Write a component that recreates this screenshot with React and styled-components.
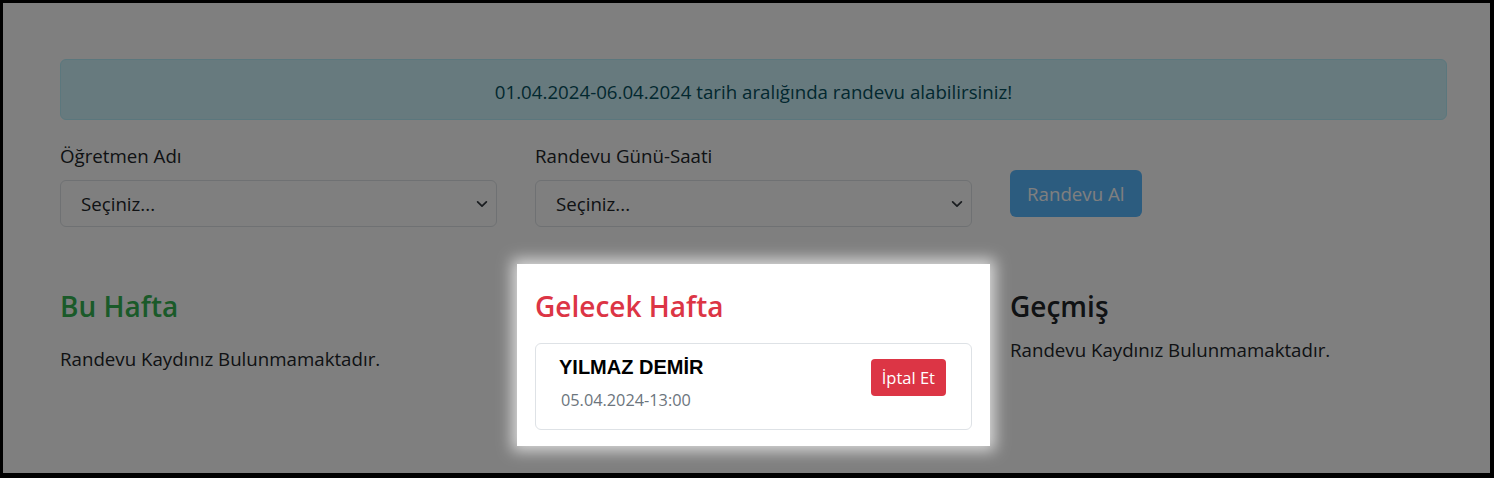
import React from "react";
import styled, { createGlobalStyle } from "styled-components";

const GlobalStyle = createGlobalStyle`
  html, body {
    margin: 0;
    padding: 0;
    background: #000;
  }
  body {
    font-family: "Open Sans", "Noto Sans", sans-serif;
    color: #212529;
  }
`;

const Frame = styled.div`
  width: 1494px;
  height: 478px;
  box-sizing: border-box;
  border-style: solid;
  border-color: #000;
  border-width: 3px 4px 5px 3px;
  background: #fff;
  overflow: hidden;
`;

const Page = styled.div`
  padding: 56px 43px 0 57px;
`;

const Alert = styled.div`
  height: 61px;
  box-sizing: border-box;
  padding: 17px 16px 13px;
  border: 1px solid #b6effb;
  border-radius: 6px;
  background: #cff4fc;
  color: #055160;
  font-size: 18.7px;
  line-height: 29px;
  text-align: center;
  margin-bottom: 21px;
`;

const FormRow = styled.div`
  display: grid;
  grid-template-columns: 437px 437px auto;
  column-gap: 38px;
  align-items: start;
`;

const Field = styled.div`
  display: flex;
  flex-direction: column;
`;

const Label = styled.label`
  font-size: 18.7px;
  line-height: 30px;
  margin-bottom: 9px;
`;

const SelectBox = styled.div`
  height: 47px;
  box-sizing: border-box;
  border: 1px solid #dee2e6;
  border-radius: 6px;
  display: flex;
  align-items: center;
  justify-content: space-between;
  padding: 0 7px 0 20px;
  font-size: 18.7px;
  color: #212529;
`;

const SubmitButton = styled.button`
  justify-self: start;
  margin-top: 29px;
  height: 47px;
  padding: 0 17px;
  border: none;
  border-radius: 6px;
  background: #58b8ff;
  color: #fff;
  font-family: inherit;
  font-size: 18.7px;
`;

const Sections = styled.div`
  display: grid;
  grid-template-columns: repeat(3, 473px);
  column-gap: 2px;
  margin: 37px 0 0 -18px;
`;

const Column = styled.div`
  padding: 24px 18px 16px;
  ${(p) =>
    p.$spot &&
    `
    position: relative;
    z-index: 1;
    background: #fff;
    box-shadow: 0 0 14px 5px rgba(255, 255, 255, 0.7),
      0 0 0 3000px rgba(0, 0, 0, 0.5);
  `}
`;

const Heading = styled.h4`
  margin: 0 0 ${(p) => p.$gap}px;
  font-size: 28px;
  font-weight: 600;
  line-height: 36px;
  color: ${(p) => p.$color};
`;

const Empty = styled.p`
  margin: 0;
  font-size: 18.7px;
  line-height: 30px;
`;

const Card = styled.div`
  border: 1px solid #dee2e6;
  border-radius: 6px;
  padding: 11px 25px 16px 23px;
  display: flex;
  justify-content: space-between;
  align-items: flex-start;
`;

const Name = styled.h5`
  margin: 0 0 8px;
  font-family: "Liberation Sans", Arial, sans-serif;
  font-weight: 700;
  font-size: 20px;
  line-height: 24px;
  color: #000;
`;

const DateText = styled.div`
  padding-left: 2px;
  font-size: 16.3px;
  line-height: 26px;
  color: #6c757d;
`;

const CancelButton = styled.button`
  margin-top: 4px;
  height: 37px;
  padding: 0 11px;
  border: none;
  border-radius: 4px;
  background: #dc3545;
  color: #fff;
  font-family: inherit;
  font-size: 16.5px;
`;

const Chevron = () => (
  <svg width="14" height="14" viewBox="0 0 16 16" fill="none">
    <path
      d="M3 5.5l5 5 5-5"
      stroke="#343a40"
      strokeWidth="2"
      strokeLinecap="round"
      strokeLinejoin="round"
    />
  </svg>
);

export default function App() {
  return (
    <>
      <GlobalStyle />
      <Frame>
        <Page>
          <Alert>
            01.04.2024-06.04.2024 tarih aralığında randevu alabilirsiniz!
          </Alert>
          <FormRow>
            <Field>
              <Label>Öğretmen Adı</Label>
              <SelectBox>
                <span>Seçiniz...</span>
                <Chevron />
              </SelectBox>
            </Field>
            <Field>
              <Label>Randevu Günü-Saati</Label>
              <SelectBox>
                <span>Seçiniz...</span>
                <Chevron />
              </SelectBox>
            </Field>
            <SubmitButton>Randevu Al</SubmitButton>
          </FormRow>
          <Sections>
            <Column>
              <Heading $color="#34b552" $gap={20}>
                Bu Hafta
              </Heading>
              <Empty>Randevu Kaydınız Bulunmamaktadır.</Empty>
            </Column>
            <Column $spot>
              <Heading $color="#dc3545" $gap={19}>
                Gelecek Hafta
              </Heading>
              <Card>
                <div>
                  <Name>YILMAZ DEMİR</Name>
                  <DateText>05.04.2024-13:00</DateText>
                </div>
                <CancelButton>İptal Et</CancelButton>
              </Card>
            </Column>
            <Column>
              <Heading $color="#212529" $gap={11}>
                Geçmiş
              </Heading>
              <Empty>Randevu Kaydınız Bulunmamaktadır.</Empty>
            </Column>
          </Sections>
        </Page>
      </Frame>
    </>
  );
}
